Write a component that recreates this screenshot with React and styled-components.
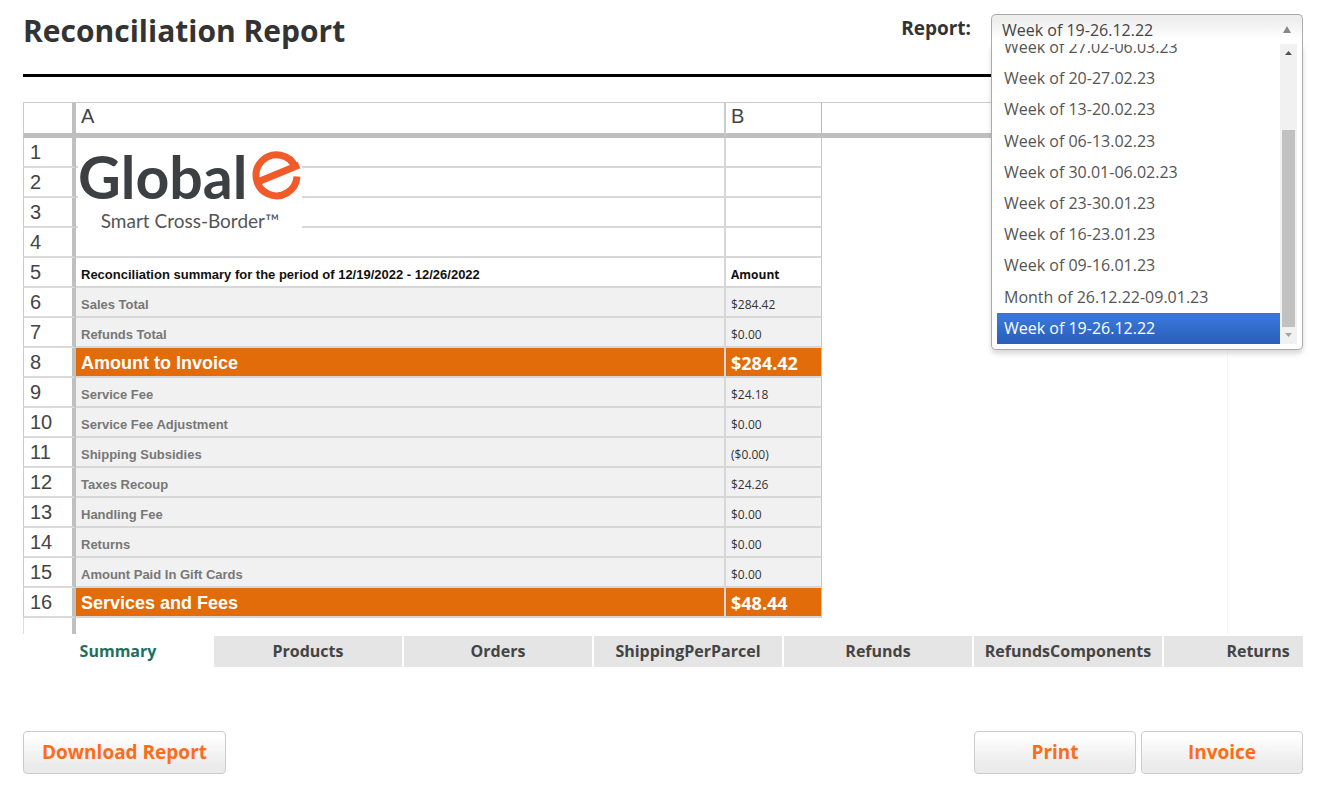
import React, { useLayoutEffect, useRef, useState } from 'react'
import styled, { createGlobalStyle } from 'styled-components';

const weeks = [
    'Week of 27.02-06.03.23',
    'Week of 20-27.02.23',
    'Week of 13-20.02.23',
    'Week of 06-13.02.23',
    'Week of 30.01-06.02.23',
    'Week of 23-30.01.23',
    'Week of 16-23.01.23',
    'Week of 09-16.01.23',
    'Month of 26.12.22-09.01.23',
    'Week of 19-26.12.22',
]

const rows = [
    { kind: 'blank', logo: true },
    { kind: 'blank' },
    { kind: 'blank' },
    { kind: 'blank' },
    { kind: 'head', label: 'Reconciliation summary for the period of 12/19/2022 - 12/26/2022', amount: 'Amount' },
    { kind: 'line', label: 'Sales Total', amount: '$284.42' },
    { kind: 'line', label: 'Refunds Total', amount: '$0.00' },
    { kind: 'total', label: 'Amount to Invoice', amount: '$284.42' },
    { kind: 'line', label: 'Service Fee', amount: '$24.18' },
    { kind: 'line', label: 'Service Fee Adjustment', amount: '$0.00' },
    { kind: 'line', label: 'Shipping Subsidies', amount: '($0.00)' },
    { kind: 'line', label: 'Taxes Recoup', amount: '$24.26' },
    { kind: 'line', label: 'Handling Fee', amount: '$0.00' },
    { kind: 'line', label: 'Returns', amount: '$0.00' },
    { kind: 'line', label: 'Amount Paid In Gift Cards', amount: '$0.00' },
    { kind: 'total', label: 'Services and Fees', amount: '$48.44' },
]

const tabs = ['Summary', 'Products', 'Orders', 'ShippingPerParcel', 'Refunds', 'RefundsComponents', 'Returns']

function ReportPicker() {

    const [week, setWeek] = useState('Week of 19-26.12.22')
    const listRef = useRef(null)

    useLayoutEffect(() => {
        listRef.current.scrollTop = listRef.current.scrollHeight
    }, [])

    return (
        <Picker>
            <PickerLabel htmlFor="report">Report:</PickerLabel>
            <PickerBox>
                <PickerSelect id="report" value={week} onChange={(e) => setWeek(e.target.value)}>
                    {weeks.map((w) => <option key={w}>{w}</option>)}
                </PickerSelect>
                <PickerArrow viewBox="0 0 10 8" aria-hidden="true">
                    <path d="M5 0 L9 7 H1 Z" fill="#888" />
                </PickerArrow>
                <Menu>
                    <WeekList ref={listRef} role="listbox" aria-label="Report">
                        {weeks.map((w) => (
                            <Week key={w} role="option" aria-selected={w === week} $active={w === week} onClick={() => setWeek(w)}>
                                {w}
                            </Week>
                        ))}
                    </WeekList>
                    <ScrollTrack aria-hidden="true">
                        <ScrollArrow viewBox="0 0 17 17"><path d="M5 11 L8.5 7 L12 11 Z" fill="#505050" /></ScrollArrow>
                        <ScrollThumb />
                        <ScrollArrow viewBox="0 0 17 17"><path d="M5 6 L8.5 10 L12 6 Z" fill="#a3a3a3" /></ScrollArrow>
                    </ScrollTrack>
                </Menu>
            </PickerBox>
        </Picker>
    )
}

function BrandLogo() {
    return (
        <Logo>
            <LogoTop>
                <LogoName>Global</LogoName>
                <LogoMark viewBox="0 0 50 50" role="img" aria-label="e">
                    <g fill="none" stroke="#f15a29" strokeWidth="7">
                        <path d="M43.5 16.5 A20.5 20.5 0 1 0 45 25.5" />
                        <path d="M8 30 L47 14" />
                    </g>
                </LogoMark>
            </LogoTop>
            <LogoLine>Smart Cross-Border™</LogoLine>
        </Logo>
    )
}

function App() {

    const [tab, setTab] = useState('Summary')

    return (
        <Page>
            <GlobalStyle />
            <Header>
                <Title>Reconciliation Report</Title>
                <ReportPicker />
            </Header>

            <Sheet>
                <colgroup>
                    <NumberCol />
                    <LabelCol />
                    <AmountCol />
                    <col />
                    <EndCol />
                </colgroup>
                <thead>
                    <tr>
                        <Corner />
                        <ColumnName scope="col">A</ColumnName>
                        <ColumnName scope="col">B</ColumnName>
                        <ColumnHead colSpan={2} />
                    </tr>
                </thead>
                <tbody>
                    {rows.map((row, i) => (
                        <tr key={i}>
                            <RowNumber scope="row">{i + 1}</RowNumber>
                            <Cell $kind={row.kind}>{row.logo ? <BrandLogo /> : row.label}</Cell>
                            <Amount $kind={row.kind}>{row.amount}</Amount>
                            <Empty />
                            <td />
                        </tr>
                    ))}
                    <tr>
                        <RowEnd />
                        <td />
                        <td />
                        <Empty />
                        <td />
                    </tr>
                </tbody>
            </Sheet>

            <Tabs role="tablist">
                {tabs.map((t) => (
                    <Tab key={t} role="tab" aria-selected={t === tab} $active={t === tab} onClick={() => setTab(t)}>
                        {t}
                    </Tab>
                ))}
            </Tabs>

            <Actions>
                <ActionButton>Download Report</ActionButton>
                <ActionGroup>
                    <ActionButton>Print</ActionButton>
                    <ActionButton>Invoice</ActionButton>
                </ActionGroup>
            </Actions>
        </Page>
    )
}

export default App;

const GlobalStyle = createGlobalStyle`
* {
    box-sizing:border-box;
}

body {
    margin:0;
    background:#fff;
    color:#333;
    font-family:"Open Sans", "Noto Sans", sans-serif;
}

button, select {
    font-family:inherit;
}
`

const Page = styled.div`
padding:0 16px 26px 23px;
`

const Header = styled.header`
display:flex;
justify-content:space-between;
align-items:flex-start;
height:77px;
padding-top:14px;
border-bottom:3px solid #000;
`

const Title = styled.h1`
margin:0;
font-size:30px;
line-height:34px;
font-weight:700;
`

const Picker = styled.div`
display:flex;
gap:20px;
`

const PickerLabel = styled.label`
font-size:19px;
line-height:28px;
font-weight:700;
`

const PickerBox = styled.div`
position:relative;
width:312px;
`

const PickerSelect = styled.select`
display:block;
appearance:none;
width:100%;
height:30px;
padding:0 30px 0 10px;
border:1px solid #aaa;
border-bottom:none;
border-radius:5px 5px 0 0;
background:linear-gradient(#eee 20%, #fff 80%);
color:#444;
font-size:16px;
outline:none;
`

const PickerArrow = styled.svg`
position:absolute;
top:12px;
right:11px;
width:10px;
height:8px;
pointer-events:none;
`

const Menu = styled.div`
position:absolute;
top:100%;
left:0;
right:0;
z-index:2;
display:flex;
height:306px;
padding:0 5px 5px;
border:1px solid #aaa;
border-top:none;
border-radius:0 0 5px 5px;
background:#fff;
box-shadow:0 4px 5px rgba(0,0,0,0.15);
`

const WeekList = styled.ul`
flex:1;
margin:0;
padding:0;
list-style:none;
overflow-y:auto;
scrollbar-width:none;
`

const Week = styled.li`
padding:6px 7px;
font-size:16px;
line-height:1.2;
cursor:pointer;
color:${(p) => p.$active ? '#fff' : '#555'};
background:${(p) => p.$active ? 'linear-gradient(#3875d7 20%, #2a62bc 90%)' : 'none'};
`

const ScrollTrack = styled.div`
display:flex;
flex-direction:column;
justify-content:space-between;
align-items:center;
width:17px;
background:#f1f1f1;
`

const ScrollArrow = styled.svg`
width:17px;
height:17px;
`

const ScrollThumb = styled.div`
width:13px;
height:197px;
margin-top:auto;
background:#c1c1c1;
`

const Sheet = styled.table`
width:100%;
margin-top:25px;
table-layout:fixed;
border-collapse:separate;
border-spacing:0;
font-family:"Liberation Sans", Arial, sans-serif;

td, th {
    padding:0;
}
`

const NumberCol = styled.col`
width:53px;
`

const LabelCol = styled.col`
width:650px;
`

const AmountCol = styled.col`
width:96px;
`

const EndCol = styled.col`
width:75px;
`

const ColumnHead = styled.th`
height:36px;
border-top:1px solid #ccc;
border-bottom:5px solid #bfbfbf;
`

const Corner = styled(ColumnHead)`
border-left:1px solid #ccc;
border-right:4px solid #c0c0c0;
`

const ColumnName = styled(ColumnHead)`
border-right:2px solid #ccc;

&:nth-child(3) {
    border-right:1px solid #bbb;
}

&& {
    padding:0 5px 4px;
    font-size:20px;
    font-weight:400;
    text-align:left;
    color:#444;
}
`

const RowNumber = styled.th`
height:30px;
border-left:1px solid #ccc;
border-right:4px solid #c0c0c0;
border-bottom:2px solid #dadada;

&& {
    padding-left:6px;
    font-size:20px;
    line-height:28px;
    font-weight:400;
    text-align:left;
    color:#444;
}
`

const RowEnd = styled.td`
height:16px;
border-left:1px solid #ddd;
border-right:4px solid #c0c0c0;
`

const cellColors = {
    blank: ['#fff', '#000'],
    head: ['#fff', '#111'],
    line: ['#f1f1f1', '#777'],
    total: ['#e26b0a', '#fff'],
}

const Cell = styled.td`
position:relative;
border-right:2px solid #d5d7d9;
border-bottom:2px solid #d5d7d9;
background:${(p) => cellColors[p.$kind][0]};
color:${(p) => cellColors[p.$kind][1]};
font-size:${(p) => p.$kind === 'total' ? 18 : 13}px;
font-weight:700;
line-height:20px;
vertical-align:bottom;

&& {
    padding:0 5px ${(p) => p.$kind === 'total' ? 3 : 1}px;
}
`

const Amount = styled(Cell)`
border-right:1px solid #c4c6c9;
color:${(p) => p.$kind === 'line' ? '#333' : cellColors[p.$kind][1]};
font-family:"Open Sans", "Noto Sans", sans-serif;
font-size:${(p) => p.$kind === 'total' ? 18 : 12}px;
font-weight:${(p) => p.$kind === 'line' ? 400 : 700};
`

const Empty = styled.td`
border-right:1px solid #f5f5f5;
`

// sits over the first three rows of column A
const Logo = styled.div`
position:absolute;
top:13px;
left:2px;
z-index:1;
width:224px;
height:78px;
background:#fff;
color:#3c4043;
font-family:Lato, sans-serif;
text-align:center;
`

const LogoTop = styled.div`
display:flex;
justify-content:space-between;
height:54px;
`

const LogoName = styled.span`
font-size:59px;
line-height:52px;
font-weight:700;
`

const LogoMark = styled.svg`
flex-shrink:0;
width:50px;
height:50px;
`

const LogoLine = styled.div`
font-size:19px;
line-height:32px;
font-weight:400;
color:#555;
`

const Tabs = styled.div`
display:flex;
gap:2px;
margin-top:2px;
padding-left:1px;
overflow:hidden;
`

const Tab = styled.button`
flex:0 0 188px;
height:31px;
padding:0 0 2px;
border:none;
background:${(p) => p.$active ? '#fff' : '#e5e5e5'};
color:${(p) => p.$active ? '#1f6f5f' : '#444'};
font-size:16px;
font-weight:700;
cursor:pointer;
`

const Actions = styled.div`
display:flex;
justify-content:space-between;
margin-top:64px;
`

const ActionGroup = styled.div`
display:flex;
gap:5px;
`

const ActionButton = styled.button`
min-width:162px;
height:43px;
padding:0 18px 2px;
border:1px solid #ccc;
border-radius:4px;
background:linear-gradient(#fff 10%, #ebebeb 80%);
color:#ff6c17;
font-size:19px;
font-weight:700;
cursor:pointer;
`
